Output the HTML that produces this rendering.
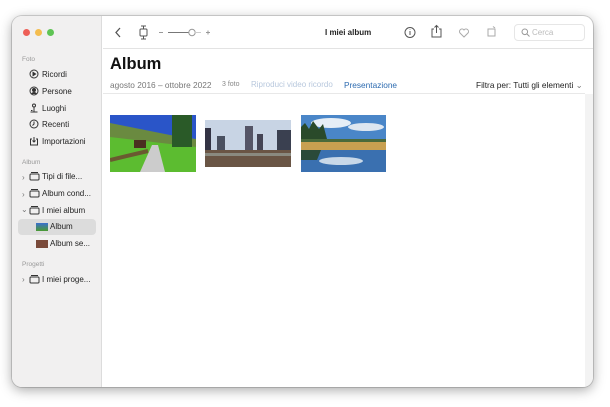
<!DOCTYPE html><html><head><meta charset="utf-8"><style>
*{margin:0;padding:0;box-sizing:border-box}
body{width:610px;height:407px;background:#fff;font-family:"Liberation Sans",sans-serif;position:relative;overflow:hidden}
.win{position:absolute;left:12px;top:16px;width:581px;height:371px;border-radius:10px;background:#fff;box-shadow:0 3px 12px rgba(0,0,0,.35),0 0 0 1px rgba(0,0,0,.15);overflow:hidden}
.side{position:absolute;left:0;top:0;width:90px;height:100%;background:#f1f0f0;border-right:1px solid #dcdcdc}
.dot{position:absolute;top:13px;width:7px;height:7px;border-radius:50%}
.t{position:absolute;font-size:8px;color:#222;white-space:nowrap}
.h{position:absolute;font-size:6.5px;color:#999}
svg.i{position:absolute}
.img{position:absolute;top:99px;height:57px}
</style></head><body>
<div class="win">
<div class="side">
<div class="dot" style="left:11px;background:#ed5f57"></div>
<div class="dot" style="left:23px;background:#f4bd4f"></div>
<div class="dot" style="left:35px;background:#5fc454"></div>
<div class="h" style="left:10px;top:40px">Foto</div>
<svg class="i" style="left:17px;top:53px" width="10" height="10" viewBox="0 0 10 10" fill="none" stroke="#333" stroke-width="1"><circle cx="5" cy="5" r="4"/><path d="M4 3.3v3.4l2.6-1.7z" fill="#333"/></svg><div class="t" style="left:30px;top:54px">Ricordi</div>
<svg class="i" style="left:17px;top:70px" width="10" height="10" viewBox="0 0 10 10" fill="none" stroke="#333" stroke-width="1"><circle cx="5" cy="5" r="4"/><circle cx="5" cy="4" r="1.5" fill="#333"/><path d="M2.5 8c1-2 4-2 5 0" fill="#333"/></svg><div class="t" style="left:30px;top:71px">Persone</div>
<svg class="i" style="left:17px;top:87px" width="10" height="10" viewBox="0 0 10 10" fill="none" stroke="#333" stroke-width="1"><circle cx="5" cy="2.5" r="1.5"/><path d="M5 4v5M1.5 9h7M2 7.5h1.5"/></svg><div class="t" style="left:30px;top:88px">Luoghi</div>
<svg class="i" style="left:17px;top:103px" width="10" height="10" viewBox="0 0 10 10" fill="none" stroke="#333" stroke-width="1"><circle cx="5" cy="5" r="4"/><path d="M5 2.5V5L3.5 6.5"/></svg><div class="t" style="left:30px;top:104px">Recenti</div>
<svg class="i" style="left:17px;top:120px" width="10" height="10" viewBox="0 0 10 10" fill="none" stroke="#333" stroke-width="1"><path d="M3 3H1.5v6h7V3H7M5 1v5M3.5 4.5L5 6l1.5-1.5"/></svg><div class="t" style="left:30px;top:121px">Importazioni</div>
<div class="h" style="left:10px;top:143px">Album</div>
<div class="t" style="left:10px;top:157px;color:#777">›</div><svg class="i" style="left:17px;top:155px" width="11" height="10" viewBox="0 0 11 10" fill="none" stroke="#333"><rect x="1" y="3" width="9" height="6" rx="1"/><path d="M2 1.5h7"/></svg><div class="t" style="left:30px;top:156px">Tipi di file...</div>
<div class="t" style="left:10px;top:174px;color:#777">›</div><svg class="i" style="left:17px;top:172px" width="11" height="10" viewBox="0 0 11 10" fill="none" stroke="#333"><rect x="1" y="3" width="9" height="6" rx="1"/><path d="M2 1.5h7"/></svg><div class="t" style="left:30px;top:173px">Album cond...</div>
<div class="t" style="left:9px;top:189px;color:#777">⌄</div><svg class="i" style="left:17px;top:189px" width="11" height="10" viewBox="0 0 11 10" fill="none" stroke="#333"><rect x="1" y="3" width="9" height="6" rx="1"/><path d="M2 1.5h7"/></svg><div class="t" style="left:30px;top:190px">I miei album</div>
<div style="position:absolute;left:6px;top:203px;width:78px;height:16px;background:#dcdcdc;border-radius:4px"></div>
<div style="position:absolute;left:24px;top:207px;width:12px;height:8px;background:linear-gradient(#3a6fd0,#4a9a30)"></div><div class="t" style="left:38px;top:206px">Album</div>
<div style="position:absolute;left:24px;top:224px;width:12px;height:8px;background:#7a4a3a"></div><div class="t" style="left:38px;top:223px">Album se...</div>
<div class="h" style="left:10px;top:245px">Progetti</div>
<div class="t" style="left:10px;top:259px;color:#777">›</div><svg class="i" style="left:17px;top:258px" width="11" height="10" viewBox="0 0 11 10" fill="none" stroke="#333"><rect x="1" y="3" width="9" height="6" rx="1"/><path d="M2 1.5h7"/></svg><div class="t" style="left:30px;top:259px">I miei proge...</div>
</div>
<svg class="i" style="left:91px;top:0" width="490" height="33" fill="none" stroke="#555" stroke-width="1">
<path d="M17 12l-4 4.5 4 4.5" stroke-width="1.3"/>
<rect x="37" y="13" width="7" height="7" rx="1"/><path d="M40.5 10v3M40.5 20v3M38 10h5M38 23h5"/>
<path d="M56 16.5h4" stroke="#999"/><path d="M65 16.5h21" stroke="#777"/><circle cx="89" cy="16.5" r="3.2" fill="#fff" stroke="#999"/><path d="M92 16.5h6" stroke="#ccc"/><path d="M103 16.5h4M105 14.5v4" stroke="#999"/>
<circle cx="307" cy="16.5" r="5"/><path d="M307 15v4M307 13.5v.5"/>
<path d="M331 13h-2v8h9v-8h-2M333.5 17V9.5M331.5 11.5l2-2 2 2"/>
<path d="M361 21l-4-4a2.3 2.3 0 0 1 4-3a2.3 2.3 0 0 1 4 3z" stroke="#aaa"/>
<rect x="385" y="13" width="7" height="7" stroke="#aaa"/><path d="M390 10.5l2 1.5" stroke="#aaa"/>
<path d="M91 33" />
</svg>
<div style="position:absolute;left:91px;top:32px;right:0;height:1px;background:#e3e3e3"></div>
<div class="t" style="left:313px;top:12px;font-weight:bold;font-size:8px">I miei album</div>
<div style="position:absolute;left:502px;top:8px;width:71px;height:17px;border:1px solid #e6e6e6;border-radius:4px;font-size:8px;color:#bbb;padding:3px 0 0 17px">Cerca</div>
<svg class="i" style="left:509px;top:12px" width="9" height="9" fill="none" stroke="#999"><circle cx="3.8" cy="3.8" r="2.8"/><path d="M6 6l2.5 2.5"/></svg>
<div style="position:absolute;left:98px;top:39px;font-size:16.5px;font-weight:bold;color:#111">Album</div>
<div class="t" style="left:98px;top:64px;color:#777;font-size:8.3px">agosto 2016 – ottobre 2022</div>
<div class="t" style="left:210px;top:65px;color:#888;font-size:7px">3 foto</div>
<div class="t" style="left:239px;top:64px;color:#b8c8dd;font-size:8px">Riproduci video ricordo</div>
<div class="t" style="left:332px;top:64px;color:#2d6bb0;font-size:8.3px">Presentazione</div>
<div class="t" style="left:464px;top:64px;font-size:8.3px">Filtra per: Tutti gli elementi <span style="color:#777">⌄</span></div>
<div style="position:absolute;left:91px;top:77px;right:8px;height:1px;background:#e8e8e8"></div>
<div style="position:absolute;right:0;top:78px;width:8px;bottom:0;background:#f3f3f3"></div>
<svg class="i" style="left:98px;top:99px" width="86" height="57"><rect width="86" height="57" fill="#2a55c8"/><path d="M0 8L30 14 60 20 86 24V57H0z" fill="#6a8a40"/><path d="M0 22L86 32V57H0z" fill="#5cbc30"/><rect x="62" y="0" width="20" height="32" fill="#2a5a28"/><path d="M30 57L42 30 48 30 55 57z" fill="#ccc"/><rect x="24" y="25" width="12" height="8" fill="#4a3020"/><path d="M0 45L38 36" stroke="#6a5a30" stroke-width="4"/></svg>
<svg class="i" style="left:193px;top:104px" width="86" height="47"><rect width="86" height="47" fill="#c8d4e4"/><rect x="0" y="8" width="6" height="25" fill="#334"/><rect x="12" y="16" width="8" height="17" fill="#4a5060"/><rect x="40" y="6" width="8" height="27" fill="#556"/><rect x="52" y="14" width="6" height="19" fill="#445"/><rect x="72" y="10" width="14" height="23" fill="#3a4050"/><rect x="0" y="30" width="86" height="17" fill="#6a5545"/><rect x="0" y="33" width="86" height="3" fill="#8a8a80"/></svg>
<svg class="i" style="left:289px;top:99px" width="85" height="57"><rect width="85" height="57" fill="#4a86c8"/><ellipse cx="30" cy="8" rx="20" ry="5" fill="#e6eef6"/><ellipse cx="65" cy="12" rx="18" ry="4" fill="#dde6f0"/><path d="M0 12L4 8 8 14 12 6 18 14 22 9 26 24H0z" fill="#2a4a2a"/><path d="M0 24H85V28L0 30z" fill="#4a6a3a"/><rect y="27" width="85" height="8" fill="#c8a050"/><rect y="35" width="85" height="22" fill="#3a70b0"/><ellipse cx="40" cy="46" rx="22" ry="4" fill="#c8d8e8"/><path d="M0 35h20l-4 10H0z" fill="#2a4a3a"/></svg>
</div>
</body></html>
